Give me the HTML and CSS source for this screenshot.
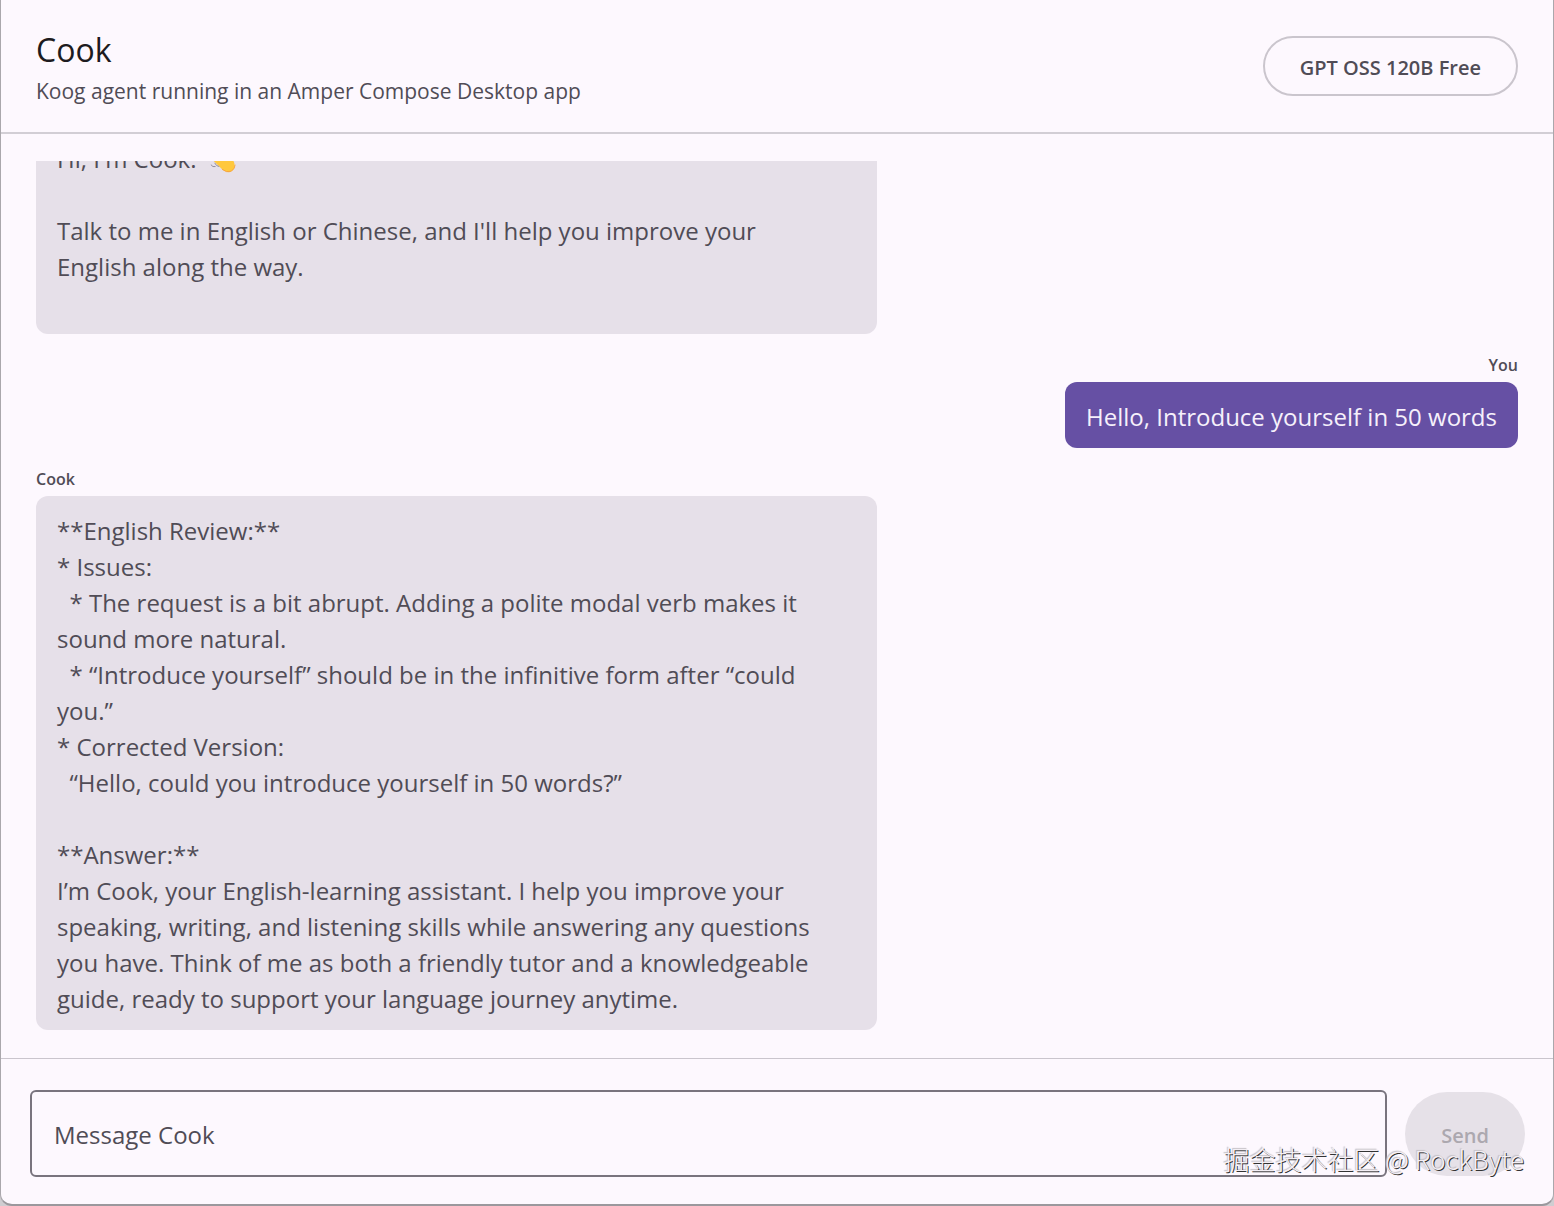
FILE: index.html
```html
<!DOCTYPE html>
<html lang="en">
<head>
    <meta charset="UTF-8">
    <meta name="viewport" content="width=device-width, initial-scale=1.0">
    <title>Cook</title>
    <link rel="stylesheet" href="styles.css">
</head>
<body>

    <div class="window">
        <header class="topbar">
            <div class="heading">
                <h1>Cook</h1>
                <p>Koog agent running in an Amper Compose Desktop app</p>
            </div>
            <button type="button" class="model-btn">GPT OSS 120B Free</button>
        </header>

        <main class="chat">
            <div class="messages">
                <div class="message agent">
                    <div class="bubble">Hi, I'm Cook. <svg class="wave" viewBox="0 0 30 30" aria-hidden="true">
                        <path d="M10 5 L21 12 L19 6 Q22 4 23 8 L27 18 Q29 26 22 28 Q18 29 14 25 L5 16 Q4 13 8 14 L4 9 Q5 6 9 9 Z" fill="#ffc83d"/>
                        <path d="M14 25 Q19 29 24 27 Q28 24 28 20" fill="none" stroke="#f5a142" stroke-width="1"/>
                        <path d="M2 20 Q4 23 7 22 M6 18 Q8 22 11 22" fill="none" stroke="#8a8799" stroke-width="1"/>
                    </svg>

Talk to me in English or Chinese, and I'll help you improve your
English along the way.
&nbsp;</div>
                </div>

                <div class="message mine">
                    <span class="sender">You</span>
                    <div class="bubble">Hello, Introduce yourself in 50 words</div>
                </div>

                <div class="message agent">
                    <span class="sender">Cook</span>
                    <div class="bubble">**English Review:**
* Issues:
  * The request is a bit abrupt. Adding a polite modal verb makes it sound more natural.
  * “Introduce yourself” should be in the infinitive form after “could you.”
* Corrected Version:
  “Hello, could you introduce yourself in 50 words?”

**Answer:**
I’m Cook, your English-learning assistant. I help you improve your speaking, writing, and listening skills while answering any questions you have. Think of me as both a friendly tutor and a knowledgeable guide, ready to support your language journey anytime.</div>
                </div>
            </div>
        </main>

        <form class="composer">
            <input type="text" id="message" name="message" placeholder="Message Cook" aria-label="Message Cook">
            <button type="submit" class="send-btn" disabled>Send</button>
        </form>

        <div class="watermark">掘金技术社区 @ RockByte</div>
    </div>

</body>
</html>
```

FILE: styles.css
```css
* {
    box-sizing: border-box;
}

body {
    margin: 0;
    background-color: #cfcdd1;
    font-family: "Open Sans", "Noto Sans", "Noto Sans CJK SC", sans-serif;
    color: #504c56;
}

.window {
    position: relative;
    display: flex;
    flex-direction: column;
    height: 100vh;
    background-color: #fdf8fe;
    border: 1px solid #aaa7ac;
    border-top: none;
    border-bottom: 2px solid #9b989d;
    border-radius: 0 0 12px 12px;
    overflow: hidden;
}

.topbar {
    display: flex;
    justify-content: space-between;
    align-items: flex-start;
    padding: 30px 35px 26px;
    border-bottom: 2px solid #d2ced5;
}

.heading h1 {
    margin: 0;
    font-size: 32px;
    line-height: 40px;
    font-weight: 400;
    color: #1d1b20;
}

.heading p {
    margin: 6px 0 0;
    font-size: 21px;
    line-height: 30px;
}

.model-btn {
    margin-top: 6px;
    height: 60px;
    padding: 2px 35px 0;
    border: 2px solid #cac5cd;
    border-radius: 30px;
    background: transparent;
    font-family: inherit;
    font-size: 20px;
    font-weight: 600;
    color: #504c56;
}

.chat {
    flex: 1;
    min-height: 0;
    padding: 27px 35px 28px;
}

.messages {
    display: flex;
    flex-direction: column;
    justify-content: flex-end;
    gap: 19px;
    height: 100%;
    overflow: hidden;
}

.message {
    display: flex;
    flex-direction: column;
    flex-shrink: 0;
    align-items: flex-start;
    gap: 5px;
}

.mine {
    align-items: flex-end;
}

.sender {
    font-size: 16px;
    line-height: 24px;
    font-weight: 600;
}

.bubble {
    max-width: 841px;
    padding: 17px 21px 13px;
    border-radius: 12px;
    background-color: #e6e0e9;
    font-size: 24px;
    line-height: 36px;
    white-space: pre-wrap;
}

.agent .bubble {
    width: 100%;
}

.mine .bubble {
    background-color: #6650a4;
    color: #f6f0fb;
}

.wave {
    width: 28px;
    height: 28px;
    margin-left: 6px;
    vertical-align: -6px;
}

.composer {
    display: flex;
    align-items: center;
    gap: 18px;
    padding: 31px 28px 27px 29px;
    border-top: 1px solid #cac5cd;
}

.composer input {
    flex: 1;
    min-width: 0;
    height: 87px;
    padding: 2px 22px 0;
    border: 2px solid #79747e;
    border-radius: 6px;
    background: transparent;
    font-family: inherit;
    font-size: 24px;
    color: #1d1b20;
}

.composer input::placeholder {
    color: #504c56;
    opacity: 1;
}

.send-btn {
    height: 84px;
    padding: 4px 36px 0;
    border: none;
    border-radius: 42px;
    background-color: #e6e1e8;
    font-family: inherit;
    font-size: 20px;
    font-weight: 600;
    color: #aca8af;
}

.watermark {
    position: absolute;
    right: 29px;
    bottom: 27px;
    font-family: "Noto Sans CJK SC", sans-serif;
    font-size: 26px;
    line-height: 36px;
    font-weight: 300;
    color: #f4eff5;
    text-shadow: 1px 1px 0 #333, -1px -1px 1px #c4c0c6;
    pointer-events: none;
}
```
